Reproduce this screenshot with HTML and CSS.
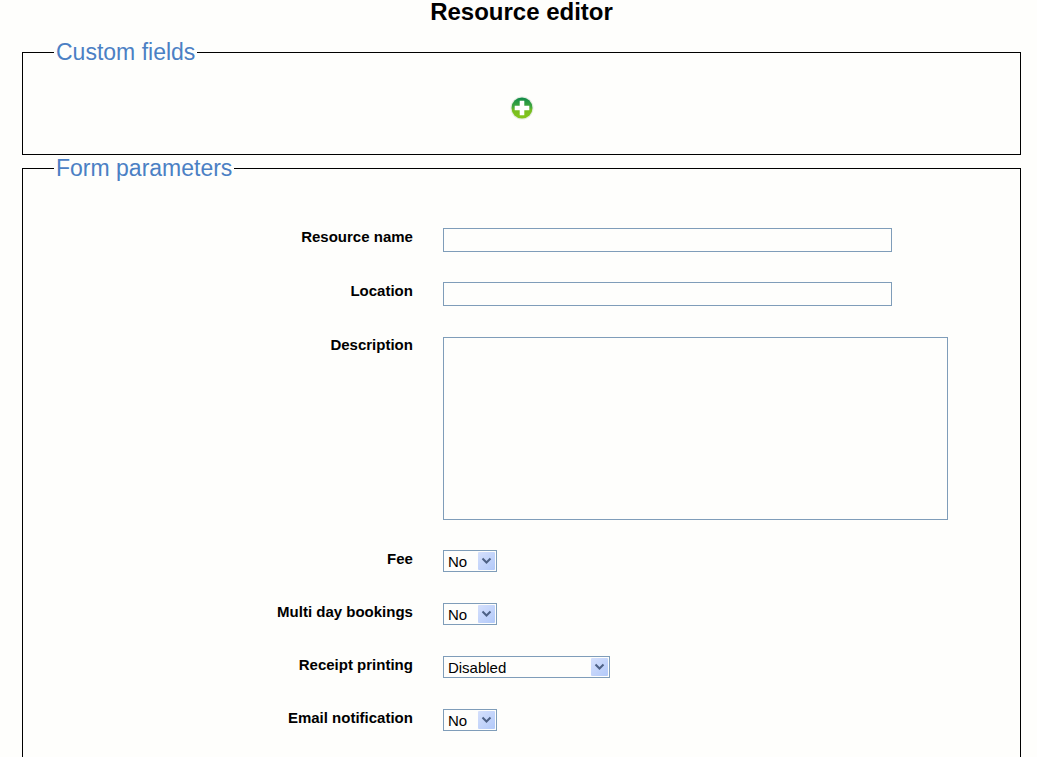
FILE: index.html
```html
<!DOCTYPE html>
<html lang="en">
<head>
<meta charset="utf-8">
<title>Resource editor</title>
<link rel="stylesheet" href="styles.css">
</head>
<body>
<h1 class="title">Resource editor</h1>
<form class="editor">
  <fieldset class="group">
    <legend class="group-title">Custom fields</legend>
    <div class="add-area">
      <button class="add-button" type="button" aria-label="Add custom field">
        <svg width="24" height="24" viewBox="0 0 24 24" aria-hidden="true">
          <defs>
            <linearGradient id="add-fill" x1="0" y1="0" x2="0" y2="1">
              <stop offset="0" stop-color="#0f8a4a"/>
              <stop offset="0.45" stop-color="#43a93c"/>
              <stop offset="0.6" stop-color="#76bd20"/>
              <stop offset="1" stop-color="#86c61c"/>
            </linearGradient>
          </defs>
          <circle cx="12" cy="12" r="11.5" fill="#e4ece0"/>
          <circle cx="12" cy="12" r="10.5" fill="url(#add-fill)"/>
          <path d="M9.7 4.7h4.6v5h5v4.6h-5v5H9.700v-5h-5V9.700h5z" fill="#fff"/>
        </svg>
      </button>
    </div>
  </fieldset>
  <fieldset class="group">
    <legend class="group-title">Form parameters</legend>
    <div class="rows">
      <div class="row">
        <label class="label" for="name">Resource name</label>
        <input class="text" id="name" type="text">
      </div>
      <div class="row">
        <label class="label" for="location">Location</label>
        <input class="text" id="location" type="text">
      </div>
      <div class="row">
        <label class="label" for="description">Description</label>
        <textarea class="text area" id="description"></textarea>
      </div>
      <div class="row">
        <label class="label" for="fee">Fee</label>
        <span class="picker">
          <select class="select" id="fee"><option>No</option><option>Yes</option></select>
          <span class="arrow"><svg width="11" height="8" viewBox="0 0 11 8" aria-hidden="true"><path d="M1.500 1.500l4 4 4-4"/></svg></span>
        </span>
      </div>
      <div class="row">
        <label class="label" for="multi">Multi day bookings</label>
        <span class="picker">
          <select class="select" id="multi"><option>No</option><option>Yes</option></select>
          <span class="arrow"><svg width="11" height="8" viewBox="0 0 11 8" aria-hidden="true"><path d="M1.500 1.500l4 4 4-4"/></svg></span>
        </span>
      </div>
      <div class="row">
        <label class="label" for="receipt">Receipt printing</label>
        <span class="picker picker-wide">
          <select class="select" id="receipt"><option>Disabled</option><option>Enabled</option></select>
          <span class="arrow"><svg width="11" height="8" viewBox="0 0 11 8" aria-hidden="true"><path d="M1.500 1.500l4 4 4-4"/></svg></span>
        </span>
      </div>
      <div class="row">
        <label class="label" for="email">Email notification</label>
        <span class="picker">
          <select class="select" id="email"><option>No</option><option>Yes</option></select>
          <span class="arrow"><svg width="11" height="8" viewBox="0 0 11 8" aria-hidden="true"><path d="M1.500 1.500l4 4 4-4"/></svg></span>
        </span>
      </div>
    </div>
  </fieldset>
</form>
</body>
</html>
```

FILE: styles.css
```css
* {
  box-sizing: border-box;
}

body {
  margin: 0 16px 0 22px;
  background: #fefefc;
  color: #000;
  font-family: "Liberation Sans", Arial, sans-serif;
  font-size: 15px;
}

.title {
  margin: 0 0 15px;
  font-size: 24px;
  line-height: 24px;
  text-align: center;
}

.group {
  min-width: 0;
  margin: 0;
  padding: 0;
  border: 1px solid #000;
}

.group-title {
  margin-left: 31px;
  padding: 0 2px;
  color: #4b80c4;
  font-size: 23px;
  line-height: 26px;
}

.add-area {
  display: flex;
  justify-content: center;
  padding: 31px 0 34px;
}

.add-button {
  display: flex;
  padding: 0;
  border: 0;
  background: none;
  cursor: pointer;
}

.rows {
  display: grid;
  gap: 30px;
  padding: 47px 0 60px;
}

.row {
  display: grid;
  grid-template-columns: 25fr 37fr;
  column-gap: 30px;
  align-items: start;
}

.label {
  font-weight: bold;
  line-height: 18px;
  text-align: right;
}

.text {
  width: 449px;
  max-width: 100%;
  height: 24px;
  padding: 2px 4px;
  border: 1px solid #7f9db9;
  border-radius: 0;
  background: #fefefc;
  font: inherit;
}

.area {
  width: 505px;
  height: 183px;
  margin: 1px 0 0;
  resize: none;
}

.picker {
  display: grid;
  width: 54px;
  margin-bottom: 1px;
}

.picker-wide {
  width: 167px;
}

.select,
.arrow {
  grid-area: 1 / 1;
}

.select {
  width: 100%;
  height: 22px;
  padding: 0 20px 0 4px;
  border: 1px solid #7f9db9;
  border-radius: 0;
  background: #fefefc;
  color: #000;
  font: inherit;
  appearance: none;
}

.arrow {
  display: flex;
  align-items: center;
  justify-content: center;
  justify-self: end;
  align-self: center;
  width: 17px;
  height: 18px;
  margin-right: 2px;
  border-radius: 1px;
  background: linear-gradient(135deg, #d5e0fc, #b2c9f9);
  pointer-events: none;
}

.arrow path {
  fill: none;
  stroke: #4d6185;
  stroke-width: 2;
}
```
